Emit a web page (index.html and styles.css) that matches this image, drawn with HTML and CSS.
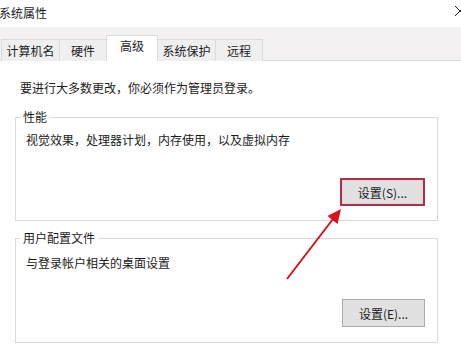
FILE: index.html
```html
<!DOCTYPE html>
<html lang="zh-CN">
<head>
    <meta charset="UTF-8">
    <meta name="viewport" content="width=device-width, initial-scale=1.0">
    <title>系统属性</title>
    <link rel="stylesheet" href="styles.css">
</head>
<body>
    <!-- Title bar -->
    <header class="titlebar">
        <span class="title">系统属性</span>
        <svg class="close" width="12" height="12" viewBox="0 0 12 12">
            <path d="M1 1 L11 11 M11 1 L1 11" stroke="#222" stroke-width="1" fill="none"/>
        </svg>
    </header>

    <!-- Tabs -->
    <nav class="tabs">
        <a class="tab tab-wide">计算机名</a>
        <a class="tab">硬件</a>
        <a class="tab tab-active">高级</a>
        <a class="tab tab-wide">系统保护</a>
        <a class="tab">远程</a>
    </nav>

    <!-- Advanced page -->
    <main class="panel">
        <p class="intro">要进行大多数更改，你必须作为管理员登录。</p>

        <fieldset class="group">
            <legend>性能</legend>
            <p class="group-text">视觉效果，处理器计划，内存使用，以及虚拟内存</p>
            <div class="group-actions">
                <button class="btn btn-focus">设置(S)...</button>
            </div>
        </fieldset>

        <fieldset class="group group-profile">
            <legend>用户配置文件</legend>
            <p class="group-text">与登录帐户相关的桌面设置</p>
            <div class="group-actions">
                <button class="btn">设置(E)...</button>
            </div>
        </fieldset>

        <fieldset class="group">
            <legend>启动和故障恢复</legend>
        </fieldset>
    </main>

    <!-- Annotation arrow -->
    <svg class="arrow" width="461" height="355" viewBox="0 0 461 355">
        <line x1="287" y1="279" x2="333" y2="219" stroke="#d3141d" stroke-width="2"/>
        <polygon points="341,209 327.5,216 337.5,224" fill="#e0101a"/>
    </svg>
</body>
</html>
```

FILE: styles.css
```css
:root {
    --text: #1b1b1b;
    --line: #dadada;
    --strip: #f3f1f2;
    --tab: #f0eff0;
    --btn: #e2e1e2;
    --focus: #a8334a;
}

* {
    margin: 0;
    padding: 0;
    box-sizing: border-box;
}

body {
    position: relative;
    width: 461px;
    height: 355px;
    overflow: hidden;
    background-color: #fff;
    color: var(--text);
    font-family: "Noto Sans CJK SC", "Noto Sans", sans-serif;
    font-size: 12px;
    line-height: 16px;
}

.titlebar {
    height: 27px;
    display: flex;
    justify-content: space-between;
    align-items: flex-start;
}

.title {
    margin-left: -1px;
    padding-top: 5px;
}

.close {
    margin-top: 5px;
    margin-right: -5px;
}

.tabs {
    height: 34px;
    display: flex;
    align-items: flex-end;
    padding-left: 1px;
    background-color: var(--strip);
    border-bottom: 1px solid var(--line);
}

.tab {
    width: 48px;
    height: 22px;
    margin-left: -1px;
    margin-bottom: -1px;
    border: 1px solid var(--line);
    border-bottom: none;
    background-color: var(--tab);
    text-align: center;
    line-height: 20px;
    padding-top: 1px;
}

.tab:first-child {
    margin-left: 0;
}

.tab-wide {
    width: 59px;
}

.tab-active {
    width: 52px;
    height: 26px;
    padding-top: 0;
    background-color: #fff;
    position: relative;
    z-index: 1;
}

.panel {
    padding: 19px 23px 0 15px;
}

.intro {
    margin-left: 5px;
}

.group {
    margin-top: 13px;
    padding: 0 12px 14px 4px;
    border: 1px solid var(--line);
}

.group legend {
    margin-left: 0;
    padding: 0 3px;
}

.group-text {
    margin: 7px 0 0 6px;
}

.group-actions {
    display: flex;
    justify-content: flex-end;
    margin-top: 30px;
}

.group-profile {
    margin-top: 9px;
    padding-bottom: 15px;
}

.group-profile .group-text {
    margin-top: 9px;
}

.group-profile .group-actions {
    margin-top: 28px;
}

.btn {
    width: 83px;
    height: 28px;
    border: 1px solid #acacac;
    background-color: var(--btn);
    color: var(--text);
    font-family: inherit;
    font-size: 12px;
}

.btn-focus {
    width: 85px;
    border: 2px solid var(--focus);
    box-shadow: inset 0 0 0 1px #e9cfd4;
}

.arrow {
    position: absolute;
    left: 0;
    top: 0;
    pointer-events: none;
}
```
